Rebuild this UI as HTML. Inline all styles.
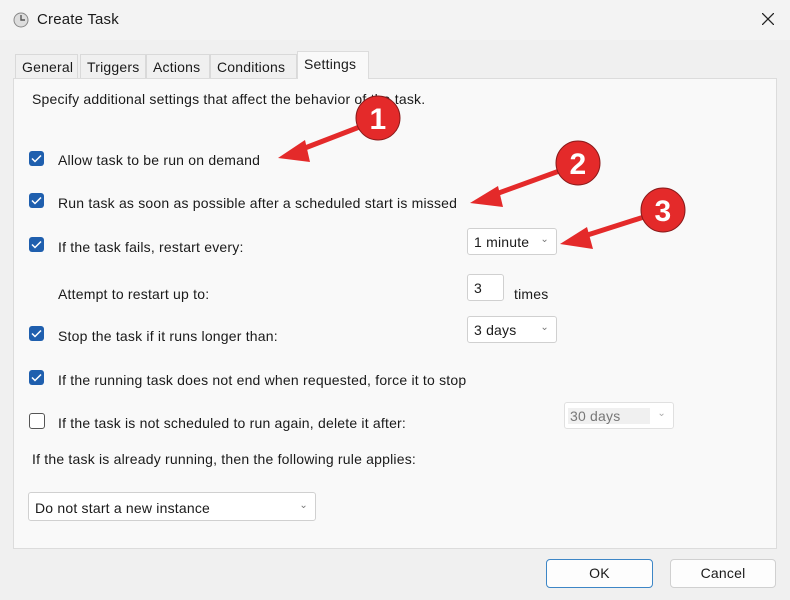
<!DOCTYPE html><html><head><style>
body{margin:0;width:790px;height:600px;background:#f0f0f0;font-family:"Liberation Sans",sans-serif;font-size:14px;letter-spacing:0.2px;color:#1a1a1a;position:relative;overflow:hidden}
.a{position:absolute;white-space:nowrap}
.cb{position:absolute;width:15px;height:15px;border-radius:3px;background:#1f5fae;left:29px}
.cb svg{position:absolute;left:2px;top:3px}
.cbo{position:absolute;width:14px;height:14px;border-radius:3px;border:1px solid #555;left:29px;background:#fff}
.dd{position:absolute;background:#fff;border:1px solid #d0d0d0;border-radius:3px;height:27px;box-sizing:border-box;padding:5px 6px;font-size:14px}
.dd i{position:absolute;right:7px;top:5px;font-style:normal;color:#777;font-size:10px}
.tab{position:absolute;top:54px;height:24px;border:1px solid #d9d9d9;border-bottom:none;background:#f0f0f0;padding:4px 6px 0;box-sizing:border-box}
.btn{position:absolute;top:559px;height:29px;background:#fdfdfd;border:1px solid #d0d0d0;border-radius:4px;box-sizing:border-box;text-align:center;line-height:27px}
</style></head><body>
<div class="a" style="left:0;top:0;width:790px;height:40px;background:#f3f3f3"></div>
<svg class="a" style="left:13px;top:12px" width="16" height="16"><circle cx="8" cy="8" r="7" fill="#ddd" stroke="#888"/><path d="M8 3V8H12" stroke="#555" fill="none" stroke-width="1.4"/></svg>
<div class="a" style="left:37px;top:11px;font-size:15px">Create Task</div>
<svg class="a" style="left:762px;top:13px" width="12" height="12"><path d="M0 0L12 12M12 0L0 12" stroke="#222" stroke-width="1.3"/></svg>
<div class="a" style="left:13px;top:78px;width:764px;height:471px;background:#f9f9f9;border:1px solid #dcdcdc;box-sizing:border-box"></div>
<div class="tab" style="left:15px;width:63px">General</div>
<div class="tab" style="left:80px;width:66px">Triggers</div>
<div class="tab" style="left:146px;width:64px">Actions</div>
<div class="tab" style="left:210px;width:87px">Conditions</div>
<div class="tab" style="left:297px;top:51px;height:28px;width:72px;background:#f9f9f9;border-color:#dcdcdc">Settings</div>
<div class="a" style="left:32px;top:91px">Specify additional settings that affect the behavior of the task.</div>
<div class="cb" style="top:151px"><svg width="11" height="9"><path d="M1 4.5L4 7.5L10 1.5" stroke="#fff" stroke-width="1.5" fill="none"/></svg></div>
<div class="a" style="left:58px;top:152px">Allow task to be run on demand</div>
<div class="cb" style="top:193px"><svg width="11" height="9"><path d="M1 4.5L4 7.5L10 1.5" stroke="#fff" stroke-width="1.5" fill="none"/></svg></div>
<div class="a" style="left:58px;top:195px">Run task as soon as possible after a scheduled start is missed</div>
<div class="cb" style="top:237px"><svg width="11" height="9"><path d="M1 4.5L4 7.5L10 1.5" stroke="#fff" stroke-width="1.5" fill="none"/></svg></div>
<div class="a" style="left:58px;top:239px">If the task fails, restart every:</div>
<div class="dd" style="left:467px;top:228px;width:90px">1 minute<i>⌄</i></div>
<div class="a" style="left:58px;top:286px">Attempt to restart up to:</div>
<div class="dd" style="left:467px;top:274px;width:37px">3</div>
<div class="a" style="left:514px;top:286px">times</div>
<div class="cb" style="top:326px"><svg width="11" height="9"><path d="M1 4.5L4 7.5L10 1.5" stroke="#fff" stroke-width="1.5" fill="none"/></svg></div>
<div class="a" style="left:58px;top:328px">Stop the task if it runs longer than:</div>
<div class="dd" style="left:467px;top:316px;width:90px">3 days<i>⌄</i></div>
<div class="cb" style="top:370px"><svg width="11" height="9"><path d="M1 4.5L4 7.5L10 1.5" stroke="#fff" stroke-width="1.5" fill="none"/></svg></div>
<div class="a" style="left:58px;top:372px">If the running task does not end when requested, force it to stop</div>
<div class="cbo" style="top:413px"></div>
<div class="a" style="left:58px;top:415px">If the task is not scheduled to run again, delete it after:</div>
<div class="dd" style="left:564px;top:402px;width:110px;color:#777;border-color:#e0e0e0"><span style="background:#f0f0f0;padding:0 30px 0 2px;margin-left:-3px">30 days</span><i style="color:#aaa">⌄</i></div>
<div class="a" style="left:32px;top:451px">If the task is already running, then the following rule applies:</div>
<div class="dd" style="left:28px;top:492px;width:288px;height:29px;padding-top:7px">Do not start a new instance<i style="top:7px">⌄</i></div>
<div class="btn" style="left:546px;width:107px;border:1.5px solid #3d86c6;line-height:26px">OK</div>
<div class="btn" style="left:670px;width:106px">Cancel</div>
<svg class="a" style="left:0;top:0" width="790" height="600">
<g fill="#e42a2a">
<line x1="362" y1="126" x2="292" y2="153" stroke="#e42a2a" stroke-width="5"/><polygon points="278,158 305,140 310,162"/>
<line x1="562" y1="170" x2="485" y2="198" stroke="#e42a2a" stroke-width="5"/><polygon points="470,203 498,186 503,207"/>
<line x1="647" y1="216" x2="575" y2="239" stroke="#e42a2a" stroke-width="5"/><polygon points="560,244 587,227 593,249"/>
<circle cx="378" cy="118" r="22" stroke="#8a1a1a" stroke-width="1"/>
<circle cx="578" cy="163" r="22" stroke="#8a1a1a" stroke-width="1"/>
<circle cx="663" cy="210" r="22" stroke="#8a1a1a" stroke-width="1"/>
</g>
<g fill="#fff" font-family="Liberation Sans" font-weight="bold" font-size="30" text-anchor="middle">
<text x="378" y="129">1</text><text x="578" y="174">2</text><text x="663" y="221">3</text></g>
</svg>
</body></html>
